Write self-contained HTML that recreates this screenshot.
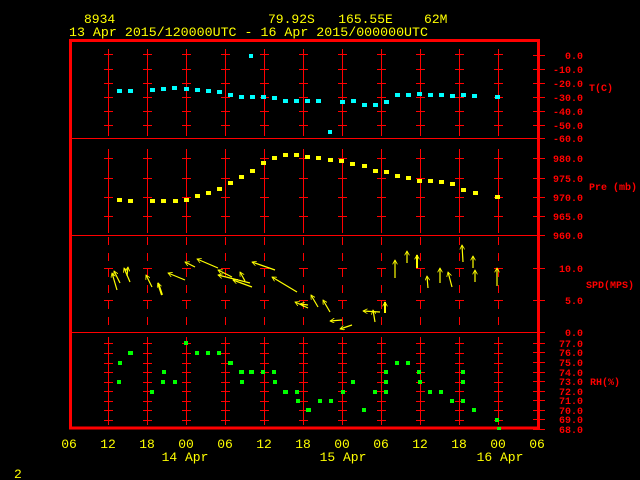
<!DOCTYPE html>
<html><head><meta charset="utf-8"><style>
html,body{margin:0;padding:0;background:#000;width:640px;height:480px;overflow:hidden}
svg{display:block}
text{font-family:"Liberation Mono","DejaVu Sans Mono",monospace;font-size:13px}
.r text{font-size:10px;font-weight:bold}
</style></head><body>
<svg width="640" height="480" viewBox="0 0 640 480" xmlns="http://www.w3.org/2000/svg">
<defs>
<marker id="ah" viewBox="0 0 10 10" refX="9" refY="5" markerWidth="5" markerHeight="5" orient="auto" markerUnits="userSpaceOnUse">
<path d="M0,0 L9,5 L0,10" fill="none" stroke="#ff0" stroke-width="1.6"/>
</marker>
<g id="colT" stroke="#f00" stroke-width="1">
<line x1="0.5" y1="49" x2="0.5" y2="136"/>
<line x1="-4" y1="54.5" x2="5" y2="54.5"/><line x1="-4" y1="69.5" x2="5" y2="69.5"/><line x1="-4" y1="83.5" x2="5" y2="83.5"/>
<line x1="-4" y1="97.5" x2="5" y2="97.5"/><line x1="-4" y1="111.5" x2="5" y2="111.5"/><line x1="-4" y1="125.5" x2="5" y2="125.5"/>
<line x1="0.5" y1="149" x2="0.5" y2="233"/>
<line x1="-4" y1="158.5" x2="5" y2="158.5"/><line x1="-4" y1="178.5" x2="5" y2="178.5"/><line x1="-4" y1="197.5" x2="5" y2="197.5"/><line x1="-4" y1="216.5" x2="5" y2="216.5"/>
<line x1="0.5" y1="237" x2="0.5" y2="331" stroke-dasharray="8,8"/>
<line x1="-4" y1="268.5" x2="5" y2="268.5"/><line x1="-4" y1="300.5" x2="5" y2="300.5"/>
<line x1="0.5" y1="337" x2="0.5" y2="425"/>
<line x1="-4" y1="343.5" x2="5" y2="343.5"/><line x1="-4" y1="353.5" x2="5" y2="353.5"/><line x1="-4" y1="363.5" x2="5" y2="363.5"/><line x1="-4" y1="372.5" x2="5" y2="372.5"/><line x1="-4" y1="382.5" x2="5" y2="382.5"/><line x1="-4" y1="391.5" x2="5" y2="391.5"/><line x1="-4" y1="401.5" x2="5" y2="401.5"/><line x1="-4" y1="410.5" x2="5" y2="410.5"/><line x1="-4" y1="420.5" x2="5" y2="420.5"/>
</g>
</defs>
<use href="#colT" x="108"/><use href="#colT" x="147"/><use href="#colT" x="186"/><use href="#colT" x="225"/><use href="#colT" x="264"/><use href="#colT" x="303"/><use href="#colT" x="342"/><use href="#colT" x="381"/><use href="#colT" x="420"/><use href="#colT" x="459"/><use href="#colT" x="498"/>
<rect x="70.5" y="40.5" width="468" height="387.5" fill="none" stroke="#f00" stroke-width="3"/>
<g stroke="#f00" stroke-width="1">
<line x1="70" y1="138.5" x2="540" y2="138.5"/><line x1="70" y1="235.5" x2="540" y2="235.5"/><line x1="70" y1="332.5" x2="540" y2="332.5"/>
</g>
<g stroke="#f00" stroke-width="1">
<line x1="533" y1="55.5" x2="545" y2="55.5"/><line x1="533" y1="69.5" x2="545" y2="69.5"/><line x1="533" y1="83.5" x2="545" y2="83.5"/><line x1="533" y1="97.5" x2="545" y2="97.5"/><line x1="533" y1="111.5" x2="545" y2="111.5"/><line x1="533" y1="125.5" x2="545" y2="125.5"/><line x1="533" y1="138.5" x2="545" y2="138.5"/>
<line x1="533" y1="158.5" x2="545" y2="158.5"/><line x1="533" y1="178.5" x2="545" y2="178.5"/><line x1="533" y1="197.5" x2="545" y2="197.5"/><line x1="533" y1="216.5" x2="545" y2="216.5"/><line x1="533" y1="235.5" x2="545" y2="235.5"/>
<line x1="533" y1="268.5" x2="545" y2="268.5"/><line x1="533" y1="300.5" x2="545" y2="300.5"/><line x1="533" y1="332.5" x2="545" y2="332.5"/>
<line x1="533" y1="343.5" x2="545" y2="343.5"/><line x1="533" y1="352.5" x2="545" y2="352.5"/><line x1="533" y1="362.5" x2="545" y2="362.5"/><line x1="533" y1="372.5" x2="545" y2="372.5"/><line x1="533" y1="381.5" x2="545" y2="381.5"/><line x1="533" y1="391.5" x2="545" y2="391.5"/><line x1="533" y1="400.5" x2="545" y2="400.5"/><line x1="533" y1="410.5" x2="545" y2="410.5"/><line x1="533" y1="419.5" x2="545" y2="419.5"/><line x1="533" y1="429.5" x2="545" y2="429.5"/>
</g>
<g class="r" fill="#f00" text-anchor="end">
<text x="583" y="59">0.0</text><text x="583" y="73">-10.0</text><text x="583" y="87">-20.0</text><text x="583" y="101">-30.0</text><text x="583" y="115">-40.0</text><text x="583" y="129">-50.0</text><text x="583" y="142">-60.0</text>
<text x="583" y="162">980.0</text><text x="583" y="182">975.0</text><text x="583" y="201">970.0</text><text x="583" y="220">965.0</text><text x="583" y="239">960.0</text>
<text x="583" y="272">10.0</text><text x="583" y="304">5.0</text><text x="583" y="336">0.0</text>
<text x="583" y="347">77.0</text><text x="583" y="356">76.0</text><text x="583" y="366">75.0</text><text x="583" y="376">74.0</text><text x="583" y="385">73.0</text><text x="583" y="395">72.0</text><text x="583" y="404">71.0</text><text x="583" y="414">70.0</text><text x="583" y="423">69.0</text><text x="583" y="433">68.0</text>
</g>
<g class="r" fill="#f00">
<text x="589" y="91">T(C)</text><text x="589" y="190">Pre (mb)</text><text x="586" y="288">SPD(MPS)</text><text x="590" y="385">RH(%)</text>
</g>
<g fill="#ff0">
<text x="84" y="23">8934</text>
<text x="268" y="23" xml:space="preserve">79.92S   165.55E    62M</text>
<text x="69" y="36" textLength="359" lengthAdjust="spacingAndGlyphs">13 Apr 2015/120000UTC - 16 Apr 2015/000000UTC</text>
<g text-anchor="middle">
<text x="69" y="448">06</text><text x="108" y="448">12</text><text x="147" y="448">18</text><text x="186" y="448">00</text><text x="225" y="448">06</text><text x="264" y="448">12</text><text x="303" y="448">18</text><text x="342" y="448">00</text><text x="381" y="448">06</text><text x="420" y="448">12</text><text x="459" y="448">18</text><text x="498" y="448">00</text><text x="537" y="448">06</text>
<text x="185" y="461">14 Apr</text><text x="343" y="461">15 Apr</text><text x="500" y="461">16 Apr</text>
</g>
<text x="14" y="478">2</text>
</g>
<g fill="#0ff">
<rect x="117" y="89" width="5" height="4"/><rect x="128" y="89" width="5" height="4"/><rect x="150" y="88" width="5" height="4"/><rect x="161" y="87" width="5" height="4"/><rect x="172" y="86" width="5" height="4"/><rect x="184" y="87" width="5" height="4"/><rect x="195" y="88" width="5" height="4"/><rect x="206" y="89" width="5" height="4"/><rect x="217" y="90" width="5" height="4"/><rect x="228" y="93" width="5" height="4"/><rect x="239" y="95" width="5" height="4"/><rect x="250" y="95" width="5" height="4"/><rect x="261" y="95" width="5" height="4"/><rect x="272" y="96" width="5" height="4"/><rect x="283" y="99" width="5" height="4"/><rect x="294" y="99" width="5" height="4"/><rect x="305" y="99" width="5" height="4"/><rect x="316" y="99" width="5" height="4"/><rect x="340" y="100" width="5" height="4"/><rect x="351" y="99" width="5" height="4"/><rect x="362" y="103" width="5" height="4"/><rect x="373" y="103" width="5" height="4"/><rect x="384" y="100" width="5" height="4"/><rect x="395" y="93" width="5" height="4"/><rect x="406" y="93" width="5" height="4"/><rect x="417" y="92" width="5" height="4"/><rect x="428" y="93" width="5" height="4"/><rect x="439" y="93" width="5" height="4"/><rect x="450" y="94" width="5" height="4"/><rect x="461" y="93" width="5" height="4"/><rect x="472" y="94" width="5" height="4"/><rect x="495" y="95" width="5" height="4"/>
<rect x="249" y="54" width="4" height="4"/><rect x="328" y="130" width="4" height="4"/>
</g>
<g fill="#ff0">
<rect x="117" y="198" width="5" height="4"/><rect x="128" y="199" width="5" height="4"/><rect x="150" y="199" width="5" height="4"/><rect x="161" y="199" width="5" height="4"/><rect x="173" y="199" width="5" height="4"/><rect x="184" y="198" width="5" height="4"/><rect x="195" y="194" width="5" height="4"/><rect x="206" y="191" width="5" height="4"/><rect x="217" y="187" width="5" height="4"/><rect x="228" y="181" width="5" height="4"/><rect x="239" y="175" width="5" height="4"/><rect x="250" y="169" width="5" height="4"/><rect x="261" y="161" width="5" height="4"/><rect x="272" y="156" width="5" height="4"/><rect x="283" y="153" width="5" height="4"/><rect x="294" y="153" width="5" height="4"/><rect x="305" y="155" width="5" height="4"/><rect x="316" y="156" width="5" height="4"/><rect x="328" y="158" width="5" height="4"/><rect x="339" y="159" width="5" height="4"/><rect x="350" y="162" width="5" height="4"/><rect x="362" y="164" width="5" height="4"/><rect x="373" y="169" width="5" height="4"/><rect x="384" y="170" width="5" height="4"/><rect x="395" y="174" width="5" height="4"/><rect x="406" y="176" width="5" height="4"/><rect x="417" y="179" width="5" height="4"/><rect x="428" y="179" width="5" height="4"/><rect x="439" y="180" width="5" height="4"/><rect x="450" y="182" width="5" height="4"/><rect x="461" y="188" width="5" height="4"/><rect x="473" y="191" width="5" height="4"/><rect x="495" y="195" width="5" height="4"/>
</g>
<g fill="#0f0">
<rect x="117" y="380" width="4" height="4"/><rect x="118" y="361" width="4" height="4"/><rect x="128" y="351" width="5" height="4"/><rect x="150" y="390" width="4" height="4"/><rect x="161" y="380" width="4" height="4"/><rect x="162" y="370" width="4" height="4"/><rect x="173" y="380" width="4" height="4"/><rect x="184" y="341" width="4" height="4"/><rect x="195" y="351" width="4" height="4"/><rect x="206" y="351" width="4" height="4"/><rect x="217" y="351" width="4" height="4"/><rect x="228" y="361" width="5" height="4"/><rect x="239" y="370" width="5" height="4"/><rect x="240" y="380" width="4" height="4"/><rect x="249" y="370" width="5" height="4"/><rect x="261" y="370" width="4" height="4"/><rect x="272" y="370" width="4" height="4"/><rect x="273" y="380" width="4" height="4"/><rect x="283" y="390" width="5" height="4"/><rect x="295" y="390" width="4" height="4"/><rect x="296" y="399" width="4" height="4"/><rect x="306" y="408" width="5" height="4"/><rect x="318" y="399" width="4" height="4"/><rect x="329" y="399" width="4" height="4"/><rect x="341" y="390" width="4" height="4"/><rect x="351" y="380" width="4" height="4"/><rect x="362" y="408" width="4" height="4"/><rect x="373" y="390" width="4" height="4"/><rect x="384" y="390" width="4" height="4"/><rect x="384" y="380" width="4" height="4"/><rect x="384" y="370" width="4" height="4"/><rect x="395" y="361" width="4" height="4"/><rect x="406" y="361" width="4" height="4"/><rect x="417" y="370" width="4" height="4"/><rect x="418" y="380" width="4" height="4"/><rect x="428" y="390" width="4" height="4"/><rect x="439" y="390" width="4" height="4"/><rect x="450" y="399" width="4" height="4"/><rect x="461" y="380" width="4" height="4"/><rect x="461" y="370" width="4" height="4"/><rect x="461" y="399" width="4" height="4"/><rect x="472" y="408" width="4" height="4"/><rect x="495" y="418" width="4" height="4"/><rect x="497" y="427" width="4" height="3"/>
</g>
<g stroke="#ff0" stroke-width="1.2" fill="none" marker-end="url(#ah)">
<line x1="117" y1="290" x2="112" y2="273"/><line x1="120" y1="283" x2="114" y2="271"/><line x1="130" y1="282" x2="124" y2="268"/><line x1="127" y1="276" x2="128" y2="267"/>
<line x1="152" y1="287" x2="146" y2="275"/><line x1="162" y1="295" x2="158" y2="283" stroke-width="2"/>
<line x1="185" y1="280" x2="168" y2="273"/><line x1="195" y1="267" x2="185" y2="262"/><line x1="218" y1="268" x2="197" y2="259"/>
<line x1="232" y1="277" x2="218" y2="270"/><line x1="250" y1="283" x2="218" y2="275"/><line x1="252" y1="287" x2="233" y2="280"/><line x1="245" y1="281" x2="240" y2="272"/>
<line x1="275" y1="270" x2="252" y2="262"/><line x1="297" y1="292" x2="272" y2="277"/><line x1="308" y1="308" x2="295" y2="302"/>
<line x1="318" y1="307" x2="311" y2="295"/><line x1="330" y1="312" x2="323" y2="300"/><line x1="308" y1="305" x2="300" y2="304"/>
<line x1="342" y1="320" x2="330" y2="321"/><line x1="352" y1="325" x2="340" y2="329"/>
<line x1="380" y1="312" x2="363" y2="311"/><line x1="375" y1="322" x2="373" y2="310"/><line x1="385" y1="313" x2="385" y2="302" stroke-width="2"/>
<line x1="395" y1="278" x2="395" y2="260"/><line x1="407" y1="263" x2="407" y2="251"/><line x1="417" y1="268" x2="417" y2="255" stroke-width="2"/>
<line x1="428" y1="288" x2="427" y2="276"/><line x1="440" y1="283" x2="440" y2="268"/><line x1="452" y1="287" x2="448" y2="272"/>
<line x1="463" y1="262" x2="462" y2="245"/><line x1="473" y1="268" x2="473" y2="256"/><line x1="475" y1="282" x2="475" y2="270"/><line x1="497" y1="286" x2="497" y2="268"/>
</g>
</svg>
</body></html>
